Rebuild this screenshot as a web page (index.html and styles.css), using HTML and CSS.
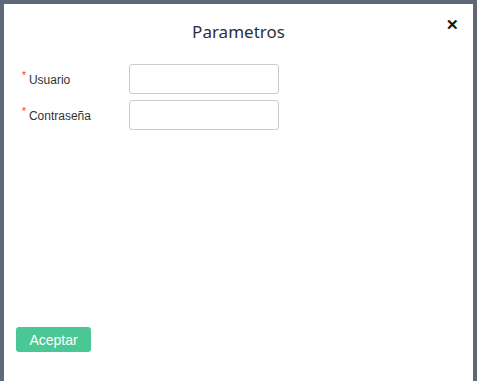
FILE: index.html
```html
<!DOCTYPE html>
<html lang="en">
<head>
    <meta charset="UTF-8">
    <title>Parametros</title>
    <link rel="stylesheet" href="styles.css">
</head>
<body>
    <div class="modal">
        <div class="modal-header">
            <h2 class="modal-title">Parametros</h2>
            <span class="close">&#x2715;</span>
        </div>
        <form class="modal-body">
            <div class="field">
                <label><span class="req">*</span>Usuario</label>
                <input type="text">
            </div>
            <div class="field">
                <label><span class="req">*</span>Contraseña</label>
                <input type="password">
            </div>
        </form>
        <div class="modal-footer">
            <button class="btn-accept">Aceptar</button>
        </div>
    </div>
</body>
</html>
```

FILE: styles.css
```css
html, body {
    margin: 0;
    height: 100%;
}

body {
    background: #5f6878;
    padding: 4px 4px 0 4px;
    box-sizing: border-box;
    font-family: "Liberation Sans", Arial, sans-serif;
}

.modal {
    background: white;
    height: 100%;
    display: flex;
    flex-direction: column;
    position: relative;
}

.modal-header {
    height: 54px;
    display: flex;
    align-items: center;
    justify-content: center;
}

.modal-title {
    margin: 0;
    font-family: "Noto Sans", sans-serif;
    font-weight: 400;
    font-size: 17px;
    color: #2b2f3a;
}

.close {
    position: absolute;
    top: 12px;
    right: 14px;
    font-size: 15px;
    font-weight: bold;
    color: #111;
}

.modal-body {
    flex: 1;
    padding: 6px 0 0 18px;
}

.field {
    display: flex;
    align-items: center;
    margin-bottom: 6px;
}

.field label {
    width: 107px;
    font-size: 12px;
    color: #333;
    position: relative;
    top: -1px;
}

.req {
    color: #e33;
    font-size: 10px;
    vertical-align: 5px;
    margin-right: 3px;
}

.field input {
    width: 150px;
    height: 30px;
    box-sizing: border-box;
    border: 1px solid #ccc;
    border-radius: 3px;
}

.modal-footer {
    padding: 0 0 29px 12px;
}

.btn-accept {
    background: #4bc795;
    color: white;
    border: none;
    border-radius: 3px;
    width: 75px;
    height: 25px;
    font-family: "Liberation Sans", Arial, sans-serif;
    font-size: 14px;
}
```
